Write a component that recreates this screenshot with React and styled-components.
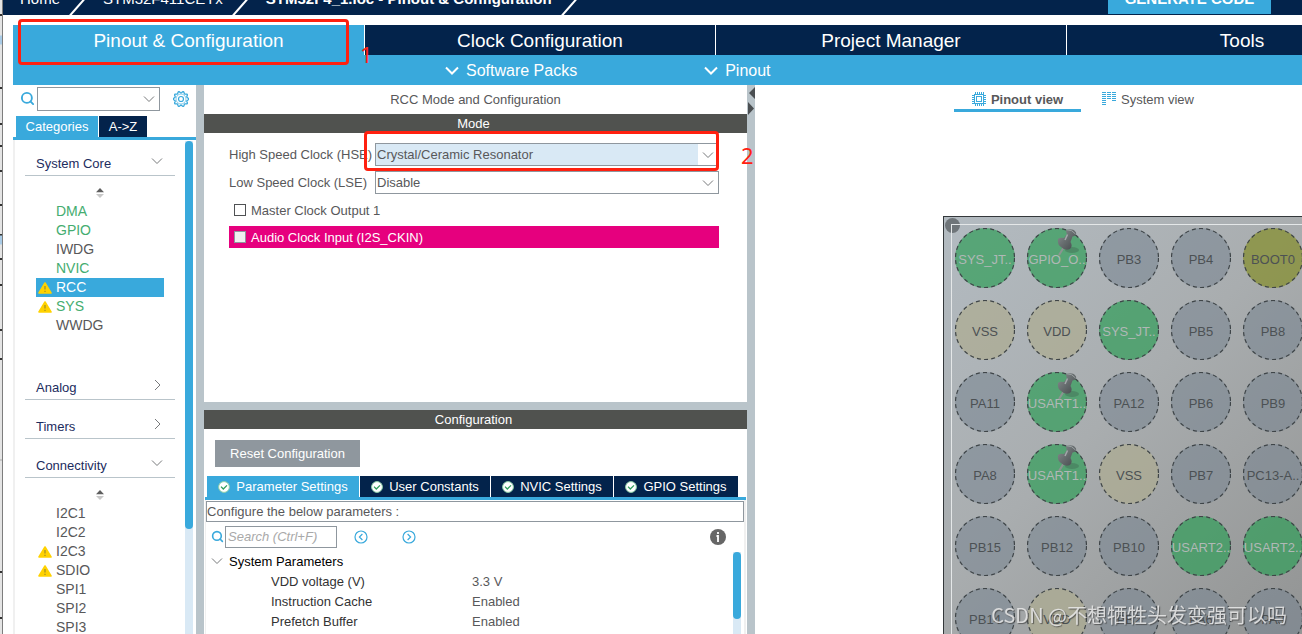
import React from "react";
import styled, { createGlobalStyle, css } from "styled-components";
import { Search } from "lucide-react";

const navy = "#03234b";
const blue = "#39a9dc";
const steel = "#b9c4ca";
const slate = "#8f979e";
const ink = "#58585a";
const pale = "#d9e9f5";
const red = "#ff2010";

const GlobalStyle = createGlobalStyle`
  *, *::before, *::after { box-sizing: border-box; }
  html, body, #root { height: 100%; margin: 0; }
  body { background: #fff; overflow: hidden; }
  body, button, input, select {
    font: 13px/19px "Liberation Sans", Arial, sans-serif;
    color: ${ink};
  }
  button { border: 0; padding: 0; background: none; cursor: pointer; }
  a { color: inherit; text-decoration: none; }
  ul { list-style: none; margin: 0; padding: 0; }
  h1, h2, h3 { margin: 0; font: inherit; }
  svg { display: block; flex: none; }
`;

const Screen = styled.div`
  display: flex;
  height: 100%;
`;
const DesktopEdge = styled.div`
  flex: 0 0 3px;
  overflow: hidden;
  background: #e4e4e4;
  border-right: 1px solid #7d7d7d;
`;
const Window = styled.main`
  flex: 1;
  min-width: 0;
  display: flex;
  flex-direction: column;
`;

/* Breadcrumb bar, scrolled partly out of view */
const Breadcrumbs = styled.nav`
  display: flex;
  flex: none;
  align-items: flex-end;
  height: 15px;
  padding: 0 31px 0 17px;
  overflow: hidden;
  background: ${navy};
  color: #fff;
  font-size: 15px;
  line-height: 20px;
  white-space: nowrap;
`;
const Crumb = styled.a`
  padding-bottom: 6px;
  font-weight: ${(p) => (p.$current ? 700 : 400)};
`;
const SlashMark = styled.svg`
  margin: 0 18px 0 9px;
`;
const GenerateButton = styled.button`
  flex: none;
  width: 163px;
  height: 30px;
  margin: 0 0 1px auto;
  padding-bottom: 1px;
  background: ${blue};
  color: #fff;
  font-size: 15px;
  font-weight: 700;
`;

const Content = styled.div`
  flex: 1;
  min-height: 0;
  display: flex;
  flex-direction: column;
  padding: 10px 0 0 10px;
  overflow: hidden;
`;
const MainTabs = styled.nav`
  display: flex;
  flex: none;
  gap: 1px;
  height: 30px;
`;
const MainTab = styled.button`
  position: relative;
  flex: 0 0 350px;
  padding-top: 2px;
  background: ${(p) => (p.$active ? blue : navy)};
  color: #fff;
  font-size: 19px;
  line-height: 28px;
  &:first-child { flex-basis: 351px; }
`;
const SubBar = styled.div`
  display: flex;
  flex: none;
  gap: 127px;
  height: 30px;
  padding-left: 432px;
  background: ${blue};
`;
const SubButton = styled.button`
  display: flex;
  align-items: center;
  gap: 7px;
  color: #fff;
  font-size: 16px;
`;

/* Red marks drawn over the interface */
const Highlight = styled.span`
  position: absolute;
  z-index: 2;
  inset: ${(p) => p.$inset};
  border: 3px solid ${red};
  border-radius: 4px;
  pointer-events: none;
`;
const StepNumber = styled.span`
  position: absolute;
  z-index: 2;
  left: ${(p) => p.$left};
  top: ${(p) => p.$top};
  color: ${red};
  font: 22px/22px "Noto Sans", sans-serif;
`;

const Workspace = styled.div`
  flex: 1;
  min-height: 0;
  display: grid;
  grid-template-columns: 183px 8px 543px 8px minmax(0, 1fr);
  grid-template-rows: minmax(0, 1fr);
`;
const Divider = styled.div`
  background: ${steel};
`;

/* Category sidebar */
const Sidebar = styled.aside`
  display: flex;
  flex-direction: column;
  min-height: 0;
`;
const FilterRow = styled.div`
  display: flex;
  flex: none;
  align-items: center;
  height: 27px;
  padding: 0 7px;
  gap: 2px;
  color: ${blue};
`;
const SelectWrap = styled.div`
  position: relative;
  width: ${(p) => p.$width};
  svg {
    position: absolute;
    right: 5px;
    top: 6px;
    pointer-events: none;
  }
`;
const Select = styled.select`
  display: block;
  width: 100%;
  height: ${(p) => p.$height};
  padding: 0 1px;
  appearance: none;
  border: 1px solid ${slate};
  border-radius: 0;
  background: ${(p) => (p.$selected ? `linear-gradient(90deg, ${pale} calc(100% - 20px), #fff 0)` : "#fff")};
`;
const GearButton = styled.button`
  margin-left: auto;
`;
const TabStrip = styled.div`
  display: flex;
  flex: none;
  gap: 1px;
  height: ${(p) => p.$height};
  padding: 0 ${(p) => p.$pad};
  align-items: flex-end;
  border-bottom: 3px solid ${blue};
`;
const Tab = styled.button`
  display: flex;
  align-items: center;
  justify-content: center;
  gap: 6px;
  flex: 0 0 ${(p) => p.$width};
  height: 21px;
  background: ${(p) => (p.$active ? blue : navy)};
  color: #fff;
`;
const ScrollRow = styled.div`
  display: flex;
  flex: 1;
  min-height: 0;
  border-left: 2px solid #f0f0f0;
`;
const CategoryList = styled.div`
  flex: 1;
  display: flex;
  flex-direction: column;
  gap: 13px;
  padding: 10px 10px 0;
  overflow: hidden;
`;
const CategoryHeader = styled.button`
  display: flex;
  align-items: center;
  justify-content: space-between;
  width: 100%;
  height: 26px;
  padding: 2px 12px 0 11px;
  border-bottom: 1px solid ${steel};
  color: #1c2c5e;
  svg { margin-bottom: 5px; }
`;
const SortIcon = styled.svg`
  margin: 12px auto 4px;
`;
const PeripheralList = styled.ul`
  padding: 0 11px 26px;
`;
const Peripheral = styled.li`
  display: flex;
  align-items: center;
  height: 19px;
  padding-left: 2px;
  font-size: 14px;
  color: ${(p) => (p.$enabled ? "#45ad70" : ink)};
  ${(p) => p.$selected && css`
    background: ${blue};
    color: #fff;
  `}
`;
const IconSlot = styled.span`
  flex: 0 0 18px;
`;
const Track = styled.div`
  flex: 0 0 8px;
  margin: ${(p) => p.$margin};
  background: ${pale};
`;
const Thumb = styled.div`
  height: ${(p) => p.$height};
  border-radius: 4px;
  background: ${blue};
`;

/* Mode and configuration column */
const Editor = styled.section`
  display: flex;
  flex-direction: column;
  min-height: 0;
`;
const EditorTitle = styled.h1`
  flex: none;
  text-align: center;
  line-height: 29px;
`;
const Band = styled.h2`
  flex: none;
  height: 19px;
  padding-right: 4px;
  background: #50524f;
  color: #fff;
  text-align: center;
`;
const ModePanel = styled.div`
  display: flex;
  flex: none;
  flex-direction: column;
  gap: 5px;
  height: 277px;
  padding: 10px 28px 0 25px;
  border-bottom: 8px solid ${steel};
`;
const Field = styled.div`
  position: relative;
  display: flex;
  align-items: center;
  justify-content: space-between;
`;
const CheckRow = styled.label`
  display: flex;
  align-items: center;
  gap: 5px;
  height: 22px;
  padding-left: 5px;
  ${(p) => p.$conflict && css`
    background: #e6007e;
    color: #fff;
  `}
`;
const Checkbox = styled.input.attrs({ type: "checkbox" })`
  appearance: none;
  width: 12px;
  height: 12px;
  margin: 0;
  border: 1px solid #505254;
  background: #fff;
  &:disabled {
    border-color: ${slate};
    background: #f0f0f0;
  }
`;
const ConfigPanel = styled.div`
  display: flex;
  flex: 1;
  flex-direction: column;
  min-height: 0;
  padding: 11px 1px 0;
`;
const ResetButton = styled.button`
  flex: none;
  width: 145px;
  height: 27px;
  margin: 0 0 9px 10px;
  background: ${slate};
  color: #fff;
`;
const ConfigBody = styled.div`
  display: flex;
  flex: 1;
  flex-direction: column;
  min-height: 0;
  padding: 1px 0 0;
  border: solid #f0f0f0;
  border-width: 0 2px 0 1px;
`;
const Hint = styled.p`
  flex: none;
  margin: 0;
  height: 21px;
  border: 1px solid ${slate};
`;
const ToolRow = styled.div`
  display: flex;
  flex: none;
  align-items: center;
  height: 29px;
  padding: 0 18px 0 5px;
  color: ${blue};
`;
const SearchInput = styled.input`
  width: 112px;
  height: 22px;
  margin: 0 17px 0 1px;
  padding: 0 2px;
  border: 1px solid ${slate};
  border-radius: 0;
  font-style: italic;
  &::placeholder { color: #a9a9a9; opacity: 1; }
`;
const RoundButton = styled.button`
  margin-right: 34px;
`;
const InfoButton = styled.button`
  margin-left: auto;
`;
const ParameterRow = styled.div`
  display: flex;
  flex: 1;
  min-height: 0;
`;
const Parameters = styled.div`
  flex: 1;
  overflow: hidden;
`;
const GroupHeader = styled.button`
  display: flex;
  align-items: center;
  gap: 6px;
  height: 20px;
  padding-left: 5px;
  color: #000;
`;
const ParameterTable = styled.table`
  width: 100%;
  border-collapse: collapse;
  th, td { height: 20px; padding: 0; text-align: left; font-weight: 400; }
  th { width: 266px; padding-left: 65px; color: #333; }
`;

/* Pinout area */
const PinoutPane = styled.section`
  display: flex;
  flex-direction: column;
  min-width: 0;
  overflow: hidden;
`;
const ViewTabs = styled.div`
  display: flex;
  flex: none;
  gap: 2px;
  height: 27px;
  padding-left: 199px;
`;
const ViewTab = styled.button`
  display: flex;
  align-items: center;
  justify-content: center;
  gap: 5px;
  width: ${(p) => (p.$active ? "127px" : "130px")};
  padding-top: 4px;
  border-bottom: 3px solid ${(p) => (p.$active ? blue : "transparent")};
  font-weight: ${(p) => (p.$active ? 700 : 400)};
`;
const Chip = styled.div`
  position: relative;
  flex: none;
  width: 520px;
  height: 520px;
  margin: 104px 0 0 188px;
  padding: 7px;
  border: 1px solid #34383b;
  background: linear-gradient(135deg, #b3bbc1 0%, #a9adaf 35%, #989a9a 65%, #858787 100%);
`;
const ChipFace = styled.div`
  position: relative;
  display: grid;
  grid-template-columns: repeat(5, 60px);
  grid-auto-rows: 60px;
  gap: 12px;
  height: 100%;
  padding: 3px;
  border: 1px solid #e4e7e8;
`;
const Marker = styled.span`
  position: absolute;
  left: 1px;
  top: 1px;
  width: 15px;
  height: 15px;
  border-radius: 50%;
  background: #6f7579;
`;
const pinFill = {
  io: "rgba(118, 131, 143, 0.55)",
  on: "rgba(48, 156, 88, 0.7)",
  power: "rgba(173, 172, 145, 0.72)",
  boot: "rgba(136, 145, 58, 0.8)",
};
const Pin = styled.button`
  position: relative;
  border-radius: 50%;
  background: ${(p) => pinFill[p.$kind]};
  color: ${(p) => (p.$kind === "on" ? "#b0b8b6" : "#4c5154")};
  white-space: nowrap;
  padding-top: 3px;
  svg { position: absolute; left: 0; top: 0; }
`;
const Watermark = styled.div`
  position: fixed;
  right: 15px;
  bottom: 4px;
  color: rgba(235, 235, 235, 0.85);
  font: 20px/30px "Noto Sans CJK SC", sans-serif;
  text-shadow: 1px 1px 1px rgba(60, 60, 60, 0.7);
`;

const Slash = () => (
  <SlashMark width="16" height="15" viewBox="0 0 16 15" aria-hidden="true">
    <path d="M1 15.5 15 -.5" stroke="#fff" strokeWidth="2" />
  </SlashMark>
);
const Chevron = ({ open = true }) => (
  <svg width="12" height="12" viewBox="0 0 12 12" fill="none" stroke="#77797b" aria-hidden="true">
    <path d={open ? "M1 3.5 6 8.5 11 3.5" : "M4 1 9 6 4 11"} />
  </svg>
);
const BoldChevron = () => (
  <svg width="14" height="9" viewBox="0 0 14 9" fill="none" stroke="#fff" strokeWidth="2" aria-hidden="true">
    <path d="M1 1.5 7 7.5 13 1.5" />
  </svg>
);
const gearPoints = Array.from({ length: 120 }, (_, i) => {
  const a = (i / 120) * Math.PI * 2;
  const r = 6.9 + 0.8 * Math.cos(a * 10);
  return `${(8 + r * Math.cos(a)).toFixed(2)},${(8 + r * Math.sin(a)).toFixed(2)}`;
}).join(" ");
const Gear = () => (
  <svg width="16" height="16" viewBox="0 0 16 16" fill="none" stroke={blue} aria-hidden="true">
    <polygon points={gearPoints} strokeWidth="1.3" />
    <circle cx="8" cy="8" r="5" strokeWidth=".6" />
    <circle cx="8" cy="8" r="2.5" strokeWidth="1.2" />
  </svg>
);
const Warning = () => (
  <svg width="14" height="12" viewBox="0 0 14 12" aria-label="Warning">
    <path d="M7 1 13 11H1Z" fill="#ffd200" stroke="#ffd200" strokeWidth="1.6" strokeLinejoin="round" />
    <path d="M7 4v3.6M7 8.8v1.3" stroke="#a08c28" strokeWidth="1.2" />
  </svg>
);
const Sort = () => (
  <SortIcon width="10" height="10" viewBox="0 0 10 10" aria-hidden="true">
    <path d="M1 4.2 5 0 9 4.2Z" fill="#5e5e5e" />
    <path d="M1 6 5 10 9 6Z" fill="#c8c8c8" />
  </SortIcon>
);
const Check = () => (
  <svg width="12" height="12" viewBox="0 0 12 12" fill="none" aria-hidden="true">
    <circle cx="6" cy="6" r="5.4" fill="#fff" stroke="#8fd0a8" />
    <path d="M3 5.6 5.3 8 9 4.4" stroke="#2f9e5b" strokeWidth="1.3" />
  </svg>
);
const CircleArrow = ({ back }) => (
  <svg width="14" height="14" viewBox="0 0 14 14" fill="none" stroke={blue} aria-hidden="true">
    <circle cx="7" cy="7" r="6" strokeWidth="1.2" />
    <path d={back ? "M8.4 4 5.4 7 8.4 10" : "M5.6 4 8.6 7 5.6 10"} strokeWidth="1.2" />
  </svg>
);
const Info = () => (
  <svg width="16" height="16" viewBox="0 0 16 16" aria-hidden="true">
    <circle cx="8" cy="8" r="8" fill="#666" />
    <path d="M8 3v2M6.5 7H8v6" fill="none" stroke="#fff" strokeWidth="1.8" />
  </svg>
);
const ChipIcon = () => (
  <svg width="14" height="14" viewBox="0 0 14 14" fill="none" stroke={blue} aria-hidden="true">
    <path d="M3.500 0v2M5.500 0v2M7.500 0v2M9.500 0v2M11.500 0v2M3.500 12v2M5.500 12v2M7.500 12v2M9.500 12v2M11.500 12v2M0 3.500h2M0 5.500h2M0 7.500h2M0 9.500h2M0 11.500h2M12 3.500h2M12 5.500h2M12 7.500h2M12 9.500h2M12 11.500h2" />
    <rect x="2.5" y="2.5" width="9" height="9" />
    <rect x="4.5" y="4.5" width="5" height="5" />
  </svg>
);
const SystemIcon = () => (
  <svg width="14" height="14" viewBox="0 0 14 14" fill="none" stroke={blue} aria-hidden="true">
    <path d="M0 .5h4M5 .5h4M10 .5h4M0 2.500h4M5 2.500h4M10 2.500h4M0 4.500h4M5 4.500h4M10 4.500h4M0 6.500h4M5 6.500h4M10 6.500h4M0 8.500h4M10 8.500h4M0 10.500h4M0 12.500h4" />
  </svg>
);
const CollapseArrows = () => (
  <svg width="8" height="32" viewBox="0 0 8 32" fill="#4b4f52" aria-hidden="true">
    <path d="M8 2v12L2 8ZM1 17v13l6-6.500Z" />
  </svg>
);
const EdgeMarks = () => (
  <svg width="2" height="634" viewBox="0 0 2 634" aria-hidden="true">
    <path d="M0 15h2M0 88h2M0 124h2M0 146h2M0 171h2M0 205h2M0 235h2M0 259h2M0 285h2M0 330h2M0 359h2M0 572h2M0 618h2" stroke="#333" strokeWidth="2" />
    <path d="M0 40h2M0 240h2" stroke="#a9cbe6" strokeWidth="9" />
    <path d="M0 460h2" stroke="#aaa" />
  </svg>
);
const Ring = () => (
  <svg width="60" height="60" viewBox="0 0 60 60" fill="none" aria-hidden="true">
    <circle cx="30" cy="30" r="29.500" stroke="#3f4548" strokeWidth="1.200" strokeDasharray="4 3.200" />
  </svg>
);
const Pushpin = () => (
  <svg width="60" height="60" viewBox="0 0 60 60" aria-hidden="true">
    <defs>
      <linearGradient id="tack" x1="0" y1="0" x2="1" y2="1">
        <stop offset="0" stopColor="#8c9294" />
        <stop offset=".5" stopColor="#666c6e" />
        <stop offset="1" stopColor="#43484a" />
      </linearGradient>
    </defs>
    <ellipse cx="45" cy="22" rx="7" ry="3" fill="#3d5c4b" opacity=".35" />
    <path d="M37 19 32 27" stroke="#8b9491" strokeWidth="2" />
    <path d="M31 11Q33 9 37 10L40 6Q38 3 40 1.500Q47 0 49 4.500Q50 8 45.500 8.500L43.500 14Q46 18 43 21Q38 23 34 19Q30 16 31 11Z" fill="url(#tack)" />
    <path d="M40 1.800Q45 1.500 48.500 6" fill="none" stroke="#9ba1a3" />
    <path d="M40.500 6.500 38 12" stroke="#a3a8aa" strokeWidth="1.500" />
  </svg>
);

const categories = [
  {
    name: "System Core",
    items: [
      { name: "DMA", enabled: true },
      { name: "GPIO", enabled: true },
      { name: "IWDG" },
      { name: "NVIC", enabled: true },
      { name: "RCC", warning: true, selected: true },
      { name: "SYS", warning: true, enabled: true },
      { name: "WWDG" },
    ],
  },
  { name: "Analog" },
  { name: "Timers" },
  {
    name: "Connectivity",
    items: [
      { name: "I2C1" },
      { name: "I2C2" },
      { name: "I2C3", warning: true },
      { name: "SDIO", warning: true },
      { name: "SPI1" },
      { name: "SPI2" },
      { name: "SPI3" },
    ],
  },
];

const configTabs = [
  ["Parameter Settings", "152px"],
  ["User Constants", "130px"],
  ["NVIC Settings", "122px"],
  ["GPIO Settings", "124px"],
];

const parameters = [
  ["VDD voltage (V)", "3.3 V"],
  ["Instruction Cache", "Enabled"],
  ["Prefetch Buffer", "Enabled"],
];

const pins = [
  ["SYS_JT..", "on"], ["GPIO_O..", "on", true], ["PB3", "io"], ["PB4", "io"], ["BOOT0", "boot"],
  ["VSS", "power"], ["VDD", "power"], ["SYS_JT..", "on"], ["PB5", "io"], ["PB8", "io"],
  ["PA11", "io"], ["USART1..", "on", true], ["PA12", "io"], ["PB6", "io"], ["PB9", "io"],
  ["PA8", "io"], ["USART1..", "on", true], ["VSS", "power"], ["PB7", "io"], ["PC13-A..", "io"],
  ["PB15", "io"], ["PB12", "io"], ["PB10", "io"], ["USART2..", "on"], ["USART2..", "on"],
  ["PB14", "io"], ["VDD", "power"], ["PB2", "io"], ["PA6", "io"], ["PA3", "io"],
];

export default function App() {
  return (
    <>
      <GlobalStyle />
      <Screen>
        <DesktopEdge><EdgeMarks /></DesktopEdge>
        <Window>
          <Breadcrumbs>
            <Crumb href="#home">Home</Crumb>
            <Slash />
            <Crumb href="#device">STM32F411CEYx</Crumb>
            <Slash />
            <Crumb href="#project" $current>STM32F4_1.ioc - Pinout &amp; Configuration</Crumb>
            <Slash />
            <GenerateButton>GENERATE CODE</GenerateButton>
          </Breadcrumbs>
          <Content>
            <MainTabs>
              <MainTab $active>
                Pinout &amp; Configuration
                <Highlight $inset="-6px 15px -10px 5px" />
                <StepNumber $left="347px" $top="18px">1</StepNumber>
              </MainTab>
              <MainTab>Clock Configuration</MainTab>
              <MainTab>Project Manager</MainTab>
              <MainTab>Tools</MainTab>
            </MainTabs>
            <SubBar>
              <SubButton><BoldChevron />Software Packs</SubButton>
              <SubButton><BoldChevron />Pinout</SubButton>
            </SubBar>
            <Workspace>
              <Sidebar>
                <FilterRow>
                  <Search size={15} strokeWidth={3} />
                  <SelectWrap $width="123px">
                    <Select $height="24px" aria-label="Find peripheral"><option> </option></Select>
                    <Chevron />
                  </SelectWrap>
                  <GearButton aria-label="Settings"><Gear /></GearButton>
                </FilterRow>
                <TabStrip $height="28px" $pad="3px">
                  <Tab $active $width="82px">Categories</Tab>
                  <Tab $width="48px">A-&gt;Z</Tab>
                </TabStrip>
                <ScrollRow>
                  <CategoryList>
                    {categories.map((category) => (
                      <div key={category.name}>
                        <CategoryHeader aria-expanded={Boolean(category.items)}>
                          {category.name}
                          <Chevron open={Boolean(category.items)} />
                        </CategoryHeader>
                        {category.items && (
                          <>
                            <Sort />
                            <PeripheralList>
                              {category.items.map((item) => (
                                <Peripheral key={item.name} $enabled={item.enabled} $selected={item.selected}>
                                  <IconSlot>{item.warning && <Warning />}</IconSlot>
                                  {item.name}
                                </Peripheral>
                              ))}
                            </PeripheralList>
                          </>
                        )}
                      </div>
                    ))}
                  </CategoryList>
                  <Track $margin="1px 3px 0 0"><Thumb $height="388px" /></Track>
                </ScrollRow>
              </Sidebar>
              <Divider />
              <Editor>
                <EditorTitle>RCC Mode and Configuration</EditorTitle>
                <Band>Mode</Band>
                <ModePanel>
                  <Field>
                    <label htmlFor="hse">High Speed Clock (HSE)</label>
                    <SelectWrap $width="344px">
                      <Select id="hse" $height="23px" $selected><option>Crystal/Ceramic Resonator</option></Select>
                      <Chevron />
                    </SelectWrap>
                    <Highlight $inset="-12px 0 -5px 135px" />
                    <StepNumber $left="512px" $top="1px">2</StepNumber>
                  </Field>
                  <Field>
                    <label htmlFor="lse">Low Speed Clock (LSE)</label>
                    <SelectWrap $width="344px">
                      <Select id="lse" $height="23px"><option>Disable</option></Select>
                      <Chevron />
                    </SelectWrap>
                  </Field>
                  <CheckRow><Checkbox />Master Clock Output 1</CheckRow>
                  <CheckRow $conflict><Checkbox disabled />Audio Clock Input (I2S_CKIN)</CheckRow>
                </ModePanel>
                <Band>Configuration</Band>
                <ConfigPanel>
                  <ResetButton>Reset Configuration</ResetButton>
                  <TabStrip $height="24px" $pad="2px">
                    {configTabs.map(([name, width], i) => (
                      <Tab key={name} $width={width} $active={i === 0}><Check />{name}</Tab>
                    ))}
                  </TabStrip>
                  <ConfigBody>
                    <Hint>Configure the below parameters :</Hint>
                    <ToolRow>
                      <Search size={13} strokeWidth={3} />
                      <SearchInput placeholder="Search (Ctrl+F)" aria-label="Search" />
                      <RoundButton aria-label="Previous match"><CircleArrow back /></RoundButton>
                      <RoundButton aria-label="Next match"><CircleArrow /></RoundButton>
                      <InfoButton aria-label="Information"><Info /></InfoButton>
                    </ToolRow>
                    <ParameterRow>
                      <Parameters>
                        <GroupHeader aria-expanded="true"><Chevron />System Parameters</GroupHeader>
                        <ParameterTable>
                          <tbody>
                            {parameters.map(([name, value]) => (
                              <tr key={name}><th scope="row">{name}</th><td>{value}</td></tr>
                            ))}
                          </tbody>
                        </ParameterTable>
                      </Parameters>
                      <Track $margin="1px 3px 0 0"><Thumb $height="67px" /></Track>
                    </ParameterRow>
                  </ConfigBody>
                </ConfigPanel>
              </Editor>
              <Divider><CollapseArrows /></Divider>
              <PinoutPane>
                <ViewTabs>
                  <ViewTab $active><ChipIcon />Pinout view</ViewTab>
                  <ViewTab><SystemIcon />System view</ViewTab>
                </ViewTabs>
                <Chip>
                  <Marker />
                  <ChipFace>
                    {pins.map(([name, kind, locked], i) => (
                      <Pin key={i} $kind={kind}>
                        {name}
                        <Ring />
                        {locked && <Pushpin />}
                      </Pin>
                    ))}
                  </ChipFace>
                </Chip>
              </PinoutPane>
            </Workspace>
          </Content>
        </Window>
      </Screen>
      <Watermark>CSDN @不想牺牲头发变强可以吗</Watermark>
    </>
  );
}
